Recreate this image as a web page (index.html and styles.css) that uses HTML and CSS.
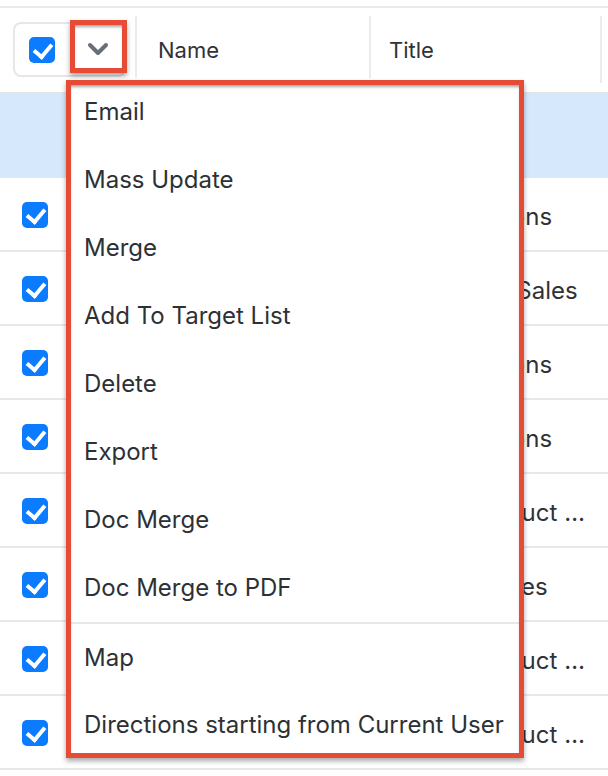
FILE: index.html
```html
<!DOCTYPE html>
<html>
  <head>
    <meta name="viewport" content="width=device-width, initial-scale=1" />
    <link rel="stylesheet" href="styles.css">
  </head>
  <body>
    <div class="list">
      <div class="head">
        <div class="head-cell select-cell">
          <div class="select-box">
            <span class="check"></span>
            <span class="caret">
              <svg width="22" height="14" viewBox="0 0 22 14">
                <path d="M3 3 L11 11 L19 3" fill="none" stroke="#677079" stroke-width="4" stroke-linecap="round" stroke-linejoin="round" />
              </svg>
            </span>
          </div>
        </div>
        <div class="head-cell col-name">Name</div>
        <div class="head-cell col-title">Title</div>
        <div class="head-cell col-rest"></div>
      </div>

      <div class="notice-row"></div>

      <div class="row">
        <div class="cell select-cell"><span class="check"></span></div>
        <div class="cell col-name">Sally Bronsen</div>
        <div class="cell col-title">VP Operations</div>
      </div>
      <div class="row">
        <div class="cell select-cell"><span class="check"></span></div>
        <div class="cell col-name">Max Jensen</div>
        <div class="cell col-title">Director of Sales</div>
      </div>
      <div class="row">
        <div class="cell select-cell"><span class="check"></span></div>
        <div class="cell col-name">Sarah Smith</div>
        <div class="cell col-title">VP Operations</div>
      </div>
      <div class="row">
        <div class="cell select-cell"><span class="check"></span></div>
        <div class="cell col-name">Jim Brennan</div>
        <div class="cell col-title">VP Operations</div>
      </div>
      <div class="row">
        <div class="cell select-cell"><span class="check"></span></div>
        <div class="cell col-name">Will Westin</div>
        <div class="cell col-title">Senior Product Manager</div>
      </div>
      <div class="row">
        <div class="cell select-cell"><span class="check"></span></div>
        <div class="cell col-name">Chris Olliver</div>
        <div class="cell col-title">Director Sales</div>
      </div>
      <div class="row">
        <div class="cell select-cell"><span class="check"></span></div>
        <div class="cell col-name">Sally Bronsen</div>
        <div class="cell col-title">Senior Product Manager</div>
      </div>
      <div class="row">
        <div class="cell select-cell"><span class="check"></span></div>
        <div class="cell col-name">Max Jensen</div>
        <div class="cell col-title">Senior Product Manager</div>
      </div>
    </div>

    <ul class="menu">
      <li>Email</li>
      <li>Mass Update</li>
      <li>Merge</li>
      <li>Add To Target List</li>
      <li>Delete</li>
      <li>Export</li>
      <li>Doc Merge</li>
      <li>Doc Merge to PDF</li>
      <li class="divider">Map</li>
      <li class="last">Directions starting from Current User</li>
    </ul>

    <!-- annotation boxes -->
    <div class="mark mark-caret"></div>
    <div class="mark mark-menu"></div>
  </body>
</html>
```

FILE: styles.css
```css
* {
  box-sizing: border-box;
}

body {
  margin: 0;
  background: #fff;
  font-family: Inter, "Noto Sans", sans-serif;
  color: #2f3338;
}

.list {
  padding-top: 6px;
}

.head {
  display: flex;
  height: 86px;
  border-top: 2px solid #e8ebee;
}

.head-cell {
  display: flex;
  align-items: center;
  font-size: 22px;
  margin: 8px 0 9px;
  border-right: 2px solid #e9ecef;
}

.select-cell {
  width: 137px;
  flex: none;
}

.head .select-cell {
  align-items: flex-start;
  padding-left: 13px;
}

.select-box {
  display: flex;
  align-items: center;
  width: 113px;
  height: 55px;
  margin-top: 6px;
  padding-left: 14px;
  border: 2px solid #e4e7eb;
  border-radius: 8px;
}

.caret {
  display: flex;
  margin-left: 32px;
  margin-top: -2px;
}

.check {
  display: block;
  width: 26px;
  height: 26px;
  border-radius: 5px;
  background: #0b7bff;
  position: relative;
}

.check:after {
  content: "";
  position: absolute;
  left: 8px;
  top: 3px;
  width: 8px;
  height: 14px;
  border: solid #fff;
  border-width: 0 4px 4px 0;
  transform: rotate(40deg);
}

.col-name {
  width: 234px;
  flex: none;
  padding-left: 21px;
}

.col-title {
  width: 231px;
  flex: none;
  padding-left: 18px;
}

.col-rest {
  flex: 1;
  border-right: none;
}

.notice-row {
  height: 86px;
  background: #d6e9fc;
  border-top: 1px solid #e1e5e9;
}

.row {
  display: flex;
  height: 74px;
  border-bottom: 2px solid #e6e9ec;
}

.cell {
  display: flex;
  align-items: center;
  font-size: 24px;
  white-space: nowrap;
  overflow: hidden;
}

.row .select-cell {
  padding-left: 22px;
  padding-top: 2px;
}

.row .col-title {
  display: block;
  line-height: 77px;
  padding-right: 16px;
  text-overflow: ellipsis;
}

.menu {
  position: absolute;
  left: 66px;
  top: 78px;
  width: 458px;
  margin: 0;
  padding: 0;
  list-style: none;
  background: #fff;
}

.menu li {
  height: 68px;
  line-height: 68px;
  padding-left: 18px;
  font-size: 24px;
  color: #2d3135;
  white-space: nowrap;
}

.menu .divider {
  border-top: 2px solid #e6e9ec;
  height: 70px;
}

.menu .last {
  height: 66px;
  line-height: 66px;
}

.mark {
  position: absolute;
  border: 5px solid #e64b35;
  box-shadow: 0 3px 5px rgba(0, 0, 0, 0.35), inset 0 3px 3px -1px rgba(0, 0, 0, 0.35);
  pointer-events: none;
}

.mark-caret {
  left: 70px;
  top: 20px;
  width: 57px;
  height: 53px;
}

.mark-menu {
  left: 66px;
  top: 80px;
  width: 458px;
  height: 678px;
}
```
